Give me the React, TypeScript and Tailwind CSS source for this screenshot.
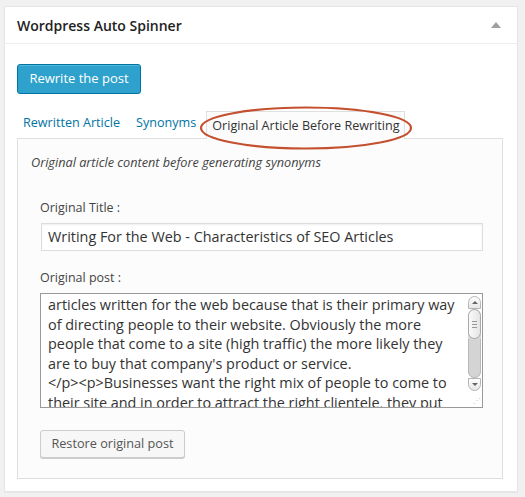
import React from 'react'

const postLines = [
  'articles written for the web because that is their primary way',
  'of directing people to their website. Obviously the more',
  'people that come to a site (high traffic) the more likely they',
  "are to buy that company's product or service.",
  '</p><p>Businesses want the right mix of people to come to',
  'their site and in order to attract the right clientele, they put',
]

function Scrollbar() {
  return (
    <div className="flex w-[15px] flex-col items-center py-[2px]">
      <div className="flex h-[13px] w-[13px] items-center justify-center rounded-t-full border border-[#b5b5b5] bg-gradient-to-b from-white to-[#e6e6e6]">
        <div className="h-0 w-0 border-x-[3px] border-b-[3px] border-x-transparent border-b-[#666]" />
      </div>
      <div className="flex w-[13px] flex-1 flex-col rounded-full bg-[#d6d6d6]">
        <div className="flex h-[30px] w-[13px] flex-col items-center justify-center gap-[2px] rounded-full border border-[#a9a9a9] bg-gradient-to-r from-[#fafafa] to-[#e4e4e4]">
          <div className="h-px w-[5px] bg-[#999]" />
          <div className="h-px w-[5px] bg-[#999]" />
          <div className="h-px w-[5px] bg-[#999]" />
        </div>
        <div className="flex-1 rounded-b-full border-x border-b border-[#b8b8b8] bg-[#d4d4d4]" />
      </div>
      <div className="flex h-[13px] w-[13px] items-center justify-center rounded-b-full border border-[#b5b5b5] bg-gradient-to-b from-white to-[#e6e6e6]">
        <div className="h-0 w-0 border-x-[3px] border-t-[3px] border-x-transparent border-t-[#666]" />
      </div>
      <div className="flex h-[14px] w-full items-end justify-end pb-[1px] pr-[1px] text-[8px] leading-none text-[#bbb]">
        ⋰
      </div>
    </div>
  )
}

export default function App() {
  return (
    <div
      className="min-h-[497px] w-[525px] bg-[#f1f1f1] pl-[4px] pt-[6px]"
      style={{ fontFamily: '"Open Sans", "Liberation Sans", sans-serif' }}
    >
      <div className="w-[514px] border border-[#e5e5e5] bg-white shadow-[0_1px_1px_rgba(0,0,0,0.04)]">
        <div className="flex h-[37px] items-center justify-between border-b border-[#eeeeee] pl-[12px] pr-[16px]">
          <h3 className="text-[14px] font-semibold text-[#222]">Wordpress Auto Spinner</h3>
          <div className="mt-[-1px] h-0 w-0 border-x-[5px] border-b-[6px] border-x-transparent border-b-[#a0a0a0]" />
        </div>

        <div className="px-[12px] pb-[12px] pt-[20px]">
          <button className="h-[30px] w-[124px] rounded-[3px] border border-[#0074a2] bg-[#2ea2cc] text-[13px] text-white shadow-[inset_0_1px_0_rgba(120,200,230,0.5)]">
            Rewrite the post
          </button>

          <div className="mt-[16px]">
            <div className="flex items-end pl-[6px] text-[12.6px]">
              <span className="pb-[5px] text-[#0074a2]">Rewritten Article</span>
              <span className="ml-[16px] pb-[5px] text-[#0074a2]">Synonyms</span>
              <span className="relative top-px ml-[10px] h-[28px] w-[199px] border border-b-0 border-[#dfdfdf] bg-[#fcfcfc] pl-[5px] pt-[5px] leading-[18px] text-[#333]">
                Original Article Before Rewriting
                <svg
                  className="pointer-events-none absolute left-[-9px] top-[-7px]"
                  width="216"
                  height="46"
                  viewBox="0 0 216 46"
                >
                  <ellipse cx="108" cy="23" rx="105" ry="20.5" fill="none" stroke="#c4502f" strokeWidth="2.2" />
                </svg>
              </span>
            </div>

            <div className="w-[486px] border border-[#dfdfdf] bg-[#fcfcfc] pb-[20px]">
              <p className="px-[13px] pt-[14px] text-[12.7px] leading-[18px] italic text-[#444]">
                Original article content before generating synonyms
              </p>
              <div className="mt-[28px] px-[22px]">
                <label className="block text-[12.5px] leading-[18px] text-[#444]">Original Title :</label>
                <div className="mt-[6px] ml-px flex h-[28px] w-[442px] items-center border border-[#dddddd] bg-white px-[6px] text-[14.4px] text-[#333] shadow-[inset_0_1px_2px_rgba(0,0,0,0.07)]">
                  Writing For the Web - Characteristics of SEO Articles
                </div>

                <label className="mt-[18px] block text-[12.5px] leading-[18px] text-[#444]">Original post :</label>
                <div className="mt-[6px] flex h-[115px] w-[443px] border border-[#999] bg-white">
                  <div className="flex-1 overflow-hidden pl-[7px] pt-[1px] text-[14.4px] leading-[19.5px] text-[#333]">
                    {postLines.map((line) => (
                      <div key={line} className="whitespace-nowrap">
                        {line}
                      </div>
                    ))}
                  </div>
                  <Scrollbar />
                </div>

                <button className="mt-[22px] h-[28px] w-[145px] rounded-[3px] border border-[#cccccc] bg-[#f7f7f7] text-[12.7px] text-[#555] shadow-[0_1px_0_#ccc]">
                  Restore original post
                </button>
              </div>
            </div>
          </div>
        </div>
      </div>
    </div>
  )
}
